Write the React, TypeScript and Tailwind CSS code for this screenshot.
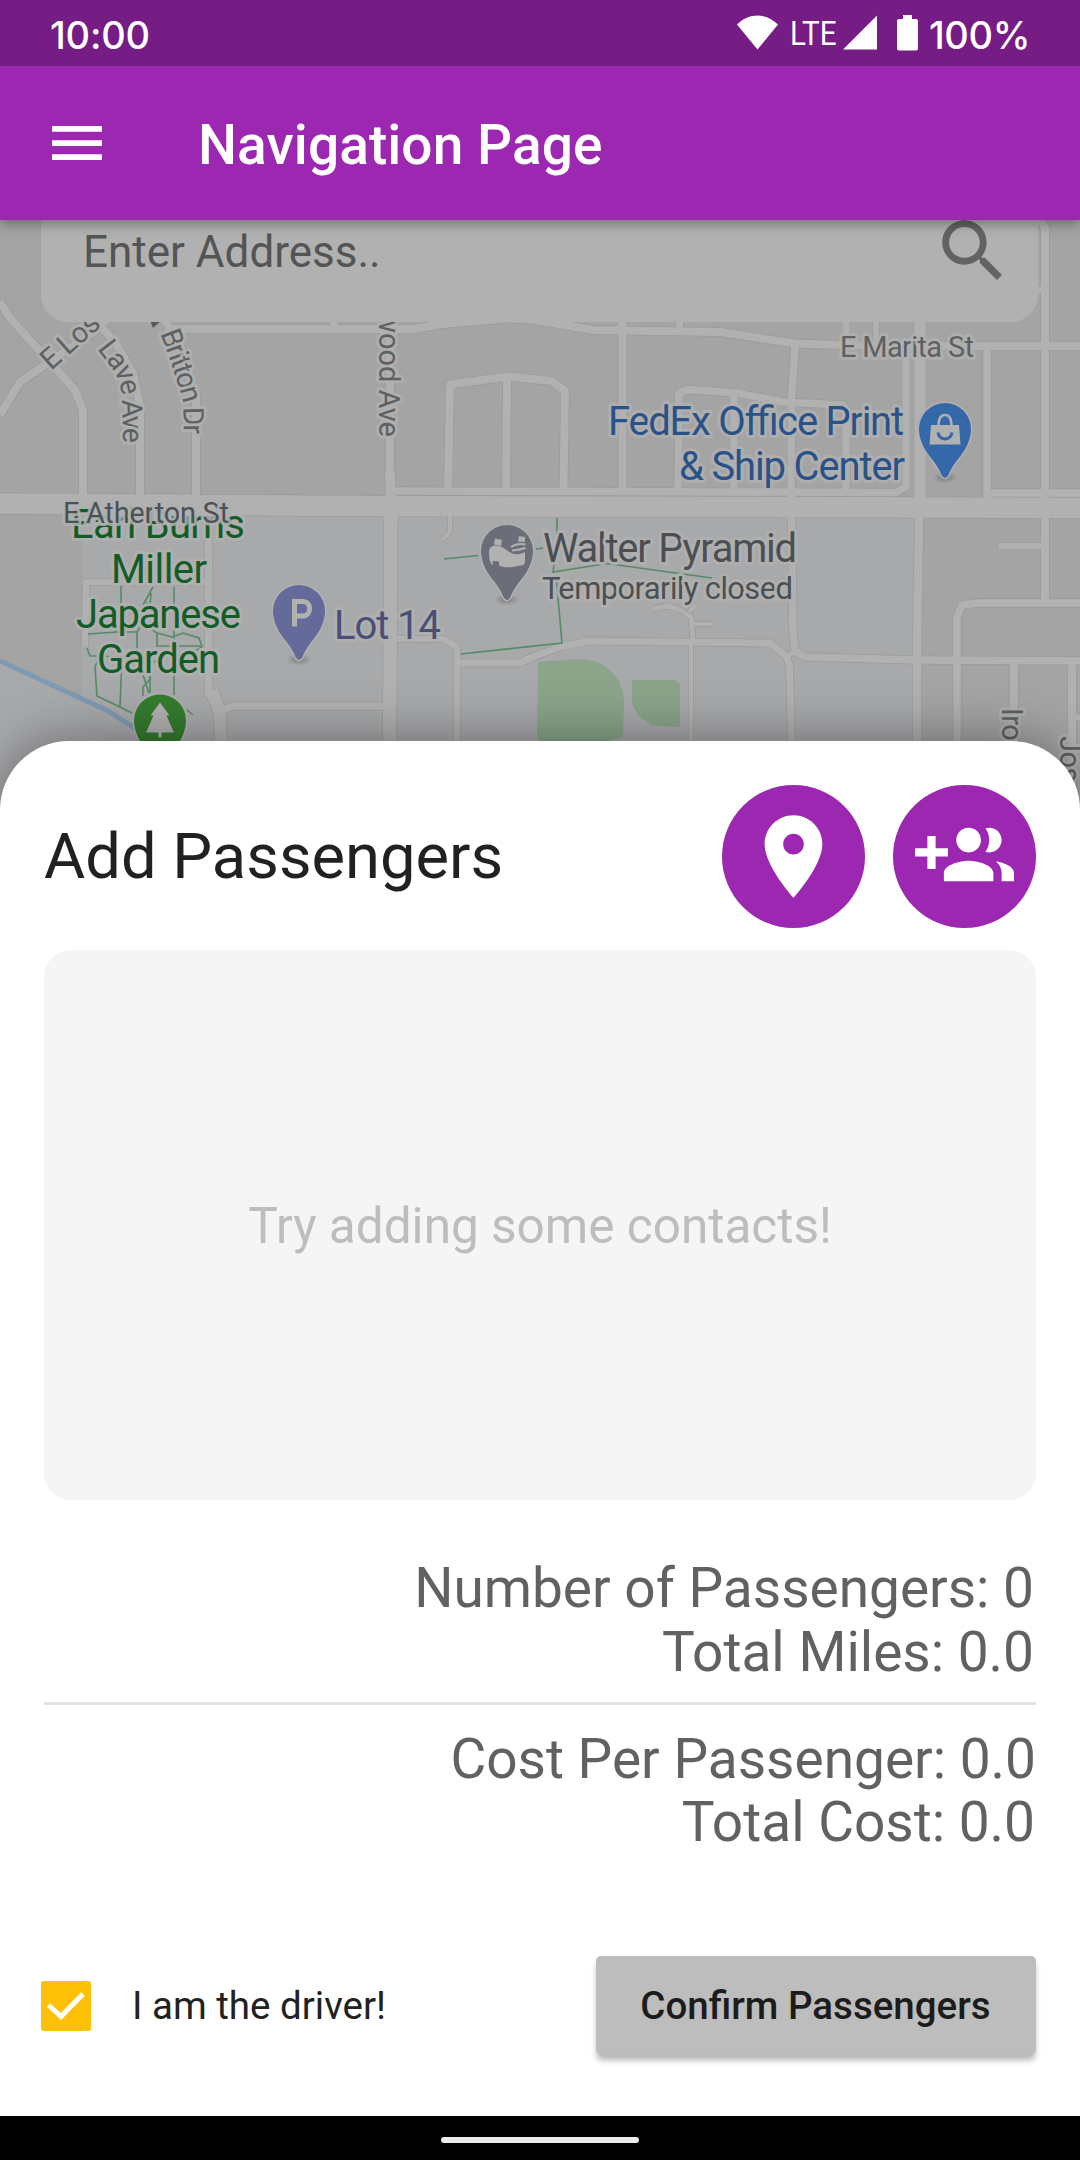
import React from "react";

type Road = { d: string; w: number };

const roads: Road[] = [
  { d: "M0 302 L10 318 L75 390 L83 410 V496", w: 8 },
  { d: "M108 318 L92 333 L20 382 L0 415", w: 8 },
  { d: "M90 315 L115 342 L133 373 L140 407 V496", w: 8 },
  { d: "M160 312 L180 345 L196 397 V497", w: 8 },
  { d: "M165 329 H413 L443 324 L507 318.5 L533 319.5 L593 330 L720 332 L795 343.5 L843 345 L920 346 H1080", w: 8 },
  { d: "M334 312 V329", w: 7 },
  { d: "M622.5 312 V492", w: 8 },
  { d: "M679.5 312 V331", w: 7 },
  { d: "M846 312 V345", w: 7 },
  { d: "M876 312 V356", w: 5.5 },
  { d: "M920 312 V500", w: 11.5 },
  { d: "M906 350 V487 L896 492.5 L720 492 L395 491", w: 7.5 },
  { d: "M987 346 V500", w: 7.5 },
  { d: "M1034 210 L1045 228 V603", w: 8 },
  { d: "M1038 290 H1045", w: 7 },
  { d: "M448 491 L450 384.5 L507 376.5 L552 381 L565 391 L563.5 491", w: 8 },
  { d: "M507 378 L506 490", w: 8 },
  { d: "M678 491 L679 393 L688 389.5 L737 393 L783 402 L843 405 L846 410 V492", w: 7.5 },
  { d: "M734 395 V491", w: 7.5 },
  { d: "M795 345 L791.5 400 L791 500", w: 7.5 },
  { d: "M990 493 H1080", w: 7.5 },
  { d: "M791.5 515 L793 633 L795 651 L805 657 L917 660 L1080 661", w: 7.5 },
  { d: "M919 515 L917 657 V760", w: 8.5 },
  { d: "M957 760 V617 L962 605 L977 603 H1080", w: 7.5 },
  { d: "M999 546 H1042", w: 6.5 },
  { d: "M1014 660 V760", w: 8 },
  { d: "M1072 661 V810", w: 8 },
  { d: "M1072 717 H1080", w: 6 },
  { d: "M390 318 V480", w: 8 },
  { d: "M391 500 L389.5 760", w: 13.5 },
  { d: "M390 472 L391 505", w: 10 },
  { d: "M450 516 V532 L442 540", w: 4 },
  { d: "M395 639 H444 L457 647 V760", w: 6.5 },
  { d: "M458 663 H520 L532 657 L560 647 L588 641 L770 643 L787 657 L789.5 667 L792 760", w: 7 },
  { d: "M795 652 L786 657", w: 4 },
  { d: "M693 640 L691 617 L680 610 L667 606 L653 609", w: 5 },
  { d: "M689 612 L697 604", w: 4 },
  { d: "M693 624 H712", w: 4 },
  { d: "M691 641 V760", w: 4.5 },
  { d: "M222 710 L233 706 H389", w: 7.5 },
  { d: "M208.5 512 V693 L217 710", w: 7.5 },
  { d: "M212 690 L220 713 L221 760", w: 12 },
  { d: "M85 646 L86 582 H207", w: 6.5 },
  { d: "M-5 503.5 L360 506 L1085 508", w: 20.5 },
];

const trails = [
  "M121 586 V632 M122 658 L120 706",
  "M174 587 V695",
  "M153 587 L143 605 M151 593 L150 606 L146 603",
  "M88 634 L117 632 H137 L143 623 M137 632 V656",
  "M115 632 L120 626",
  "M87 648 L90 656 H100 L133 658 L145 664 L157 661",
  "M100 656 L95 667 L97 696 L120 707 L132 713",
  "M157 633 V646 H202 L199 638 L183 633 L172 637 L157 633 L151 629",
  "M202 647 L192 653 L177 655",
  "M143 675 L149 693 M151 678 L143 687 V696 M150 674 V693",
  "M187 710 L193 715",
  "M444 559 L478 555.5 M536 549 L543 548",
  "M557 518 V540 L553 572 L607 563.5 L712 578",
  "M556 575 L562 643 L461 654",
];

const PIN =
  "M0 -26 A26 26 0 0 1 26 0 C26 9 22 18 17 25 C10 34 6 39 3.5 46 Q0 52 -3.5 46 C-6 39 -10 34 -17 25 C-22 18 -26 9 -26 0 A26 26 0 0 1 0 -26Z";

function MapPin({ x, y, color, children }: { x: number; y: number; color: string; children?: React.ReactNode }) {
  return (
    <g transform={`translate(${x} ${y})`}>
      <ellipse cx="0" cy="48.5" rx="13" ry="6.5" fill="url(#pin-shadow)" />
      <path d={PIN} fill={color} stroke="#b1b1b1" strokeWidth="3" style={{ paintOrder: "stroke" }} />
      {children}
    </g>
  );
}

function Label({
  x,
  y,
  size,
  fill,
  width,
  spacing,
  anchor = "start",
  transform,
  children,
}: {
  x?: number;
  y?: number;
  size: number;
  fill: string;
  width?: number;
  spacing?: number;
  anchor?: "start" | "middle" | "end";
  transform?: string;
  children: React.ReactNode;
}) {
  return (
    <text
      x={x}
      y={y}
      fontSize={size}
      fill={fill}
      textAnchor={anchor}
      textLength={width}
      letterSpacing={spacing}
      transform={transform}
      stroke="#b0b0b0"
      strokeOpacity=".88"
      strokeWidth="6"
      strokeLinejoin="round"
      style={{ paintOrder: "stroke" }}
    >
      {children}
    </text>
  );
}

function CampusMap() {
  return (
    <svg viewBox="0 220 1080 590" className="block h-[590px] w-[1080px]" fontFamily="Roboto, sans-serif">
      <defs>
        <radialGradient id="pin-shadow">
          <stop offset="0.3" stopColor="#7c7d7e" stopOpacity=".8" />
          <stop offset="1" stopColor="#8e8f90" stopOpacity="0" />
        </radialGradient>
        <path id="los" d="M51 371 L97 330 L130 305" />
        <path id="lave" d="M97 349 L111 367 Q121 381 122 398 L124 470" />
        <path id="britton" d="M160 333 Q176 375 182.500 400 Q184 408 184 460" />
      </defs>
      <rect x="0" y="220" width="1080" height="590" fill="#a4a4a4" />
      <path d="M83 505 H917 V810 H0 V660 L81 697Z" fill="#a8a9ab" />
      <path d="M0 661 L107 710.5 L136 729" stroke="#7f9ab2" strokeWidth="5" fill="none" />
      <path d="M538 662 L577 659 C603 658 624 675 624 704 L623 737 L607 741 H540 L537 738Z" fill="#8ba48a" />
      <path d="M632 680 H675 L680 684 V727 L652 725.5 L638 715 L632 704Z" fill="#8ba48a" />
      <g fill="none" stroke="#999a9a" strokeLinejoin="round">
        {roads.map((r) => (
          <path key={r.d} d={r.d} strokeWidth={r.w + 1.4} />
        ))}
      </g>
      <g fill="none" stroke="#b1b1b1" strokeLinejoin="round">
        {roads.map((r) => (
          <path key={r.d} d={r.d} strokeWidth={r.w} />
        ))}
      </g>
      <g fill="none" stroke="#558b66" strokeWidth="1.6">
        {trails.map((d) => (
          <path key={d} d={d} />
        ))}
      </g>

      <Label size={29} fill="#5d6161" spacing={-0.6}>
        <textPath href="#los">E Los</textPath>
      </Label>
      <Label size={28.5} fill="#5d6161" spacing={-1.7}>
        <textPath href="#lave">Lave Ave</textPath>
      </Label>
      <Label size={28.5} fill="#5d6161" spacing={-1.7}>
        <textPath href="#britton">Britton Dr</textPath>
      </Label>
      <path d="M150 320 L153 328 L161 321Z" fill="#555859" />
      <Label size={29} fill="#5d6161" anchor="end" transform="translate(378.500 437) rotate(90)">
        wood Ave
      </Label>
      <Label size={29} fill="#5d6161" spacing={-0.6} transform="translate(1001.500 708) rotate(90)">
        Iro
      </Label>
      <Label size={29} fill="#5d6161" spacing={-0.6} transform="translate(1060 736) rotate(90)">
        Jos
      </Label>
      <Label x={840} y={356.5} size={29} width={134} fill="#5d6161">
        E Marita St
      </Label>

      <g>
        <Label x={71} y={538.3} size={40} width={174} fill="#125c27">
          Earl Burns
        </Label>
        <Label x={111} y={583.3} size={40} width={96} fill="#125c27">
          Miller
        </Label>
        <Label x={76} y={628.3} size={40} width={165} fill="#125c27">
          Japanese
        </Label>
        <Label x={97} y={673.3} size={40} width={123} fill="#125c27">
          Garden
        </Label>
      </g>
      <Label x={63} y={523} size={29} width={166} fill="#4a5257">
        E Atherton St
      </Label>

      <Label x={608} y={435} size={40} width={296} fill="#2a5286">
        FedEx Office Print
      </Label>
      <Label x={679} y={480} size={40} width={226} fill="#2a5286">
        &amp; Ship Center
      </Label>
      <Label x={543} y={562.3} size={40} width={254} fill="#4c4f52">
        Walter Pyramid
      </Label>
      <Label x={542} y={599.3} size={31} width={251} fill="#4c4f52">
        Temporarily closed
      </Label>
      <Label x={334} y={639.3} size={40} width={107} fill="#4a4f76">
        Lot 14
      </Label>

      <MapPin x={945} y={429} color="#3568a9">
        <path d="M-14 -4 H14 L15.500 15.500 H-15.500Z" fill="#b1b1b1" />
        <path d="M-6.500 -3 C-6.500 -11 -4 -14 0 -14 C4 -14 6.500 -11 6.500 -3" fill="none" stroke="#b1b1b1" strokeWidth="2.500" />
        <path d="M-7 3.500 C-6 12 6 12 7 3.500" fill="none" stroke="#3568a9" strokeWidth="3" />
      </MapPin>
      <MapPin x={299} y={611} color="#646b9a">
        <path
          d="M-4.500 15.500 V-9.500 H3.500 C13 -9.500 13 5 3.500 5 H-4.500"
          fill="none"
          stroke="#b1b1b1"
          strokeWidth="5"
        />
      </MapPin>
      <MapPin x={507} y={551} color="#6b6e78">
        <path
          d="M-18 0 C-17 -7 -8 -7 -2 -2 C4 3 11 5 18 1 V11 C18 15 14 14 8 15.500 C2 17 -3 16.500 -8 14.500 V10.500 L-14.500 10 L-14 14 C-17 13 -18 8 -18 0Z"
          fill="#b1b1b1"
        />
        <path d="M-12 -12.500 L-5 -11 L-6 -5 L-13 -6.500Z M12 -15 L18 -14 V-9 L11 -9.500Z" fill="#b1b1b1" />
        <path d="M4 -4 Q10 -8 18.500 -6.500 M5 -0.500 Q12 -1 18.500 -3" fill="none" stroke="#b1b1b1" strokeWidth="2" />
      </MapPin>
      <MapPin x={160} y={720.5} color="#347c2d">
        <path d="M0 -18 L9.500 -5 H6.500 L14 12 H1.500 V17 H-1.500 V12 H-14 L-6.500 -5 H-9.500Z" fill="#b1b1b1" />
      </MapPin>
    </svg>
  );
}

function StatusBar() {
  return (
    <div className="relative z-20 flex h-[66px] items-center bg-[#751d84] pl-[50px] pr-[50px] text-white">
      <span className="w-[104px] whitespace-nowrap pt-[3px] font-['Inter'] text-[38px] font-medium leading-[66px] tracking-[-0.2px]">
        10:00
      </span>
      <div className="ml-auto flex items-center">
        <svg className="h-[66px] w-[41px]" viewBox="0 0 41 66" fill="currentColor">
          <path d="M0 24.500 C12 12.500 29 12.500 41 24.500 L20.500 49.500Z" />
        </svg>
        <svg className="ml-[12px] h-[66px] w-[47px]" viewBox="0 0 47 66" fill="currentColor">
          <text
            x="0"
            y="44.700"
            fontFamily="Roboto, sans-serif"
            fontSize="34"
            textLength="46.500"
            lengthAdjust="spacingAndGlyphs"
          >
            LTE
          </text>
        </svg>
        <svg className="ml-[6px] h-[66px] w-[34px]" viewBox="0 0 34 66" fill="currentColor">
          <path d="M34 15.500 V49.500 H0Z" />
        </svg>
        <svg className="ml-[20px] h-[66px] w-[21px]" viewBox="0 0 21 66" fill="currentColor">
          <path d="M6 15 H15 V19 H19 Q21 19 21 21 V48.500 Q21 50.500 19 50.500 H2 Q0 50.500 0 48.500 V21 Q0 19 2 19 H6Z" />
        </svg>
        <span className="ml-[11px] w-[101px] whitespace-nowrap pt-[3px] font-['Inter'] text-[38px] font-medium leading-[66px] tracking-[-0.4px]">
          100%
        </span>
      </div>
    </div>
  );
}

function AppBar() {
  return (
    <header className="relative z-10 flex h-[154px] items-center bg-[#9c27b0] pl-[52px] text-white shadow-[0_4px_12px_rgba(0,0,0,0.35)]">
      <svg className="h-[34px] w-[50px]" viewBox="0 0 50 34" fill="currentColor">
        <path d="M0 0H50V5.700H0Z M0 14.200H50V19.900H0Z M0 28.200H50V33.900H0Z" />
      </svg>
      <h1 className="ml-[96px] pt-[3px] text-[55px] font-medium leading-[64px] tracking-[0.08px]">Navigation Page</h1>
    </header>
  );
}

function SummaryLine({ children }: { children: React.ReactNode }) {
  return <p className="h-[64px] text-[55px] leading-[64px]">{children}</p>;
}

export default function App() {
  return (
    <div className="flex h-[2160px] w-[1080px] flex-col overflow-hidden bg-white font-['Roboto',sans-serif]">
      <StatusBar />
      <AppBar />

      <section className="relative h-[590px] shrink-0 overflow-hidden">
        <CampusMap />
        <div className="absolute left-[41px] top-[-34px] flex h-[136px] w-[997px] items-center justify-between rounded-[27px] bg-[#b1b1b1] pl-[42px] pr-[24px]">
          <span className="pb-[5px] text-[44px] leading-[52px] text-[#535454]">Enter Address..</span>
          <svg className="mb-[7px] h-[82px] w-[82px]" viewBox="0 0 24 24" fill="#636363">
            <path d="M15.500 14h-.79l-.28-.27C15.410 12.590 16 11.110 16 9.500 16 5.910 13.090 3 9.500 3S3 5.910 3 9.500 5.910 16 9.500 16c1.610 0 3.090-.59 4.230-1.570l.27.28v.79l5 4.990L20.490 19l-4.990-5zm-6 0C7.010 14 5 11.990 5 9.500S7.010 5 9.500 5 14 7.010 14 9.500 11.990 14 9.500 14z" />
          </svg>
        </div>
      </section>

      <main className="relative -mt-[69px] flex h-[1375px] shrink-0 flex-col rounded-t-[69px] bg-white px-[44px] pt-[44px] shadow-[0_0_55px_rgba(0,0,0,0.4)]">
        <div className="flex h-[143px] items-center gap-[28px]">
          <h2 className="flex-1 pb-[2px] text-[63.25px] leading-[72px] text-[#212121]">Add Passengers</h2>
          <button className="flex size-[143px] items-center justify-center rounded-full bg-[#9c27b0]">
            <svg className="size-[99px]" viewBox="0 0 24 24" fill="#fff">
              <path d="M12 2C8.130 2 5 5.130 5 9c0 5.250 7 13 7 13s7-7.750 7-13c0-3.870-3.130-7-7-7zm0 9.500c-1.380 0-2.500-1.120-2.500-2.500s1.120-2.500 2.500-2.500 2.500 1.120 2.500 2.500-1.120 2.500-2.500 2.500z" />
            </svg>
          </button>
          <button className="flex size-[143px] items-center justify-center rounded-full bg-[#9c27b0]">
            <svg className="size-[99px]" viewBox="0 0 24 24" fill="#fff">
              <path d="M8 10H5V7H3v3H0v2h3v3h2v-3h3v-2zm10 1c1.660 0 2.990-1.340 2.990-3S19.660 5 18 5c-.32 0-.63.05-.91.14.57.81.9 1.790.9 2.860s-.34 2.040-.9 2.860c.28.09.59.14.91.14zm-5 0c1.660 0 2.990-1.340 2.990-3S14.660 5 13 5c-1.660 0-3 1.340-3 3s1.340 3 3 3zm6.620 2.160c.83.73 1.380 1.660 1.380 2.840v2h3v-2c0-1.540-2.370-2.490-4.380-2.840zM13 13c-2 0-6 1-6 3v2h12v-2c0-2-4-3-6-3z" />
            </svg>
          </button>
        </div>

        <div className="mt-[22px] flex h-[550px] items-center justify-center rounded-[27px] bg-[#f5f5f5] pt-[2px] text-[49.5px] text-[#bdbdbd]">
          Try adding some contacts!
        </div>

        <div className="mt-[56px] text-right text-[#616161]">
          <div className="pr-[2px]">
            <SummaryLine>Number of Passengers: 0</SummaryLine>
            <SummaryLine>Total Miles: 0.0</SummaryLine>
          </div>
          <div className="mb-[22px] mt-[18px] h-[3px] bg-[#e2e2e2]" />
          <SummaryLine>Cost Per Passenger: 0.0</SummaryLine>
          <div className="-mt-px pr-px">
            <SummaryLine>Total Cost: 0.0</SummaryLine>
          </div>
        </div>

        <div className="mt-[102px] flex h-[99px] items-center">
          <div className="-ml-[3px] flex size-[50px] items-center justify-center rounded-[3px] bg-[#ffc107]">
            <svg className="size-[50px]" viewBox="0 0 50 50" fill="none" stroke="#fff" strokeWidth="5">
              <path d="M7.500 24 L20 35.500 L42 13" />
            </svg>
          </div>
          <span className="ml-[41px] pt-px text-[38.5px] leading-[46px] text-[#212121]">I am the driver!</span>
          <button className="ml-auto flex h-[99px] w-[440px] items-center justify-center rounded-[5px] bg-[#bdbdbd] pr-px pt-px text-[38.5px] font-medium text-[#1c1c1c] shadow-[0_6px_6px_-1px_rgba(0,0,0,0.3)]">
            Confirm Passengers
          </button>
        </div>
      </main>

      <footer className="relative flex h-[44px] shrink-0 items-center justify-center bg-black">
        <div className="mt-[4px] h-[6px] w-[198px] rounded-[3px] bg-[#ececec]" />
      </footer>
    </div>
  );
}
